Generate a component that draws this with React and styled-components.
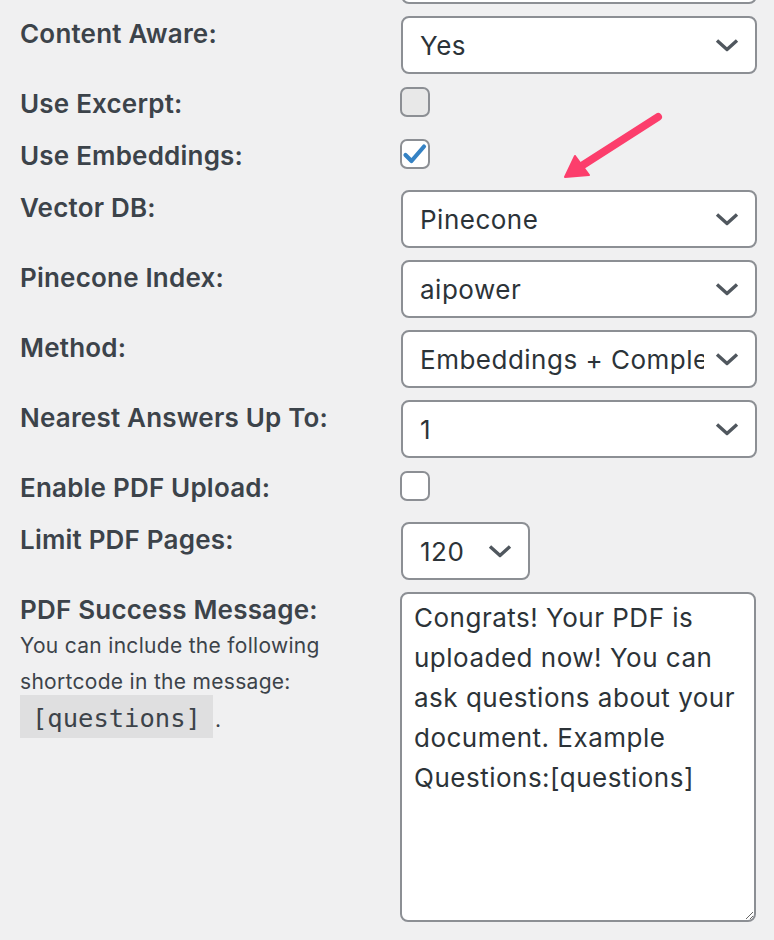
import React from 'react';
import styled, { createGlobalStyle } from 'styled-components';

const Global = createGlobalStyle`
  html, body {
    margin: 0;
    padding: 0;
    background: #f0f0f1;
    overflow: hidden;
  }
  body {
    font-family: Inter, "Noto Sans", "Liberation Sans", sans-serif;
    color: #3c434a;
  }
`;

// 페이지 전체
const Page = styled.div`
  position: relative;
  width: 774px;
  height: 940px;
  overflow: hidden;
`;

const Form = styled.div`
  display: grid;
  grid-template-columns: 381px 356px;
  align-items: start;
  padding-left: 20px;
  margin-top: -60px;
`;

const Label = styled.div`
  padding: 4px 0 8px;
  font-size: 26px;
  line-height: 40px;
  font-weight: 600;
  letter-spacing: 0.2px;
  color: #3c434a;
  white-space: nowrap;
`;

const LabelCell = styled.div`
  min-width: 0;
`;

const Field = styled.div`
  padding: 6px 0;
`;

const Description = styled.p`
  margin: -10px 0 0;
  font-size: 21px;
  line-height: 36px;
  letter-spacing: 0.3px;
  color: #3c434a;
  width: 330px;
`;

const Code = styled.code`
  font-family: "DejaVu Sans Mono", "Liberation Mono", monospace;
  font-size: 25.5px;
  letter-spacing: 0;
  background: rgba(0, 0, 0, 0.07);
  padding: 8px 12px 5px;
  margin-right: 2px;
`;

const SelectBox = styled.div`
  box-sizing: border-box;
  display: flex;
  align-items: center;
  width: ${p => p.$width || 356}px;
  height: 58px;
  padding: 0 16px 0 17px;
  background: #fff;
  border: 2px solid #8c8f94;
  border-radius: 8px;
  font-size: 26px;
  letter-spacing: 0.5px;
  color: #2c3338;
`;

const SelectText = styled.span`
  flex: 1;
  min-width: 0;
  overflow: hidden;
  white-space: nowrap;
  margin-right: 11px;
`;

const CheckBox = styled.div`
  box-sizing: border-box;
  width: 30px;
  height: 30px;
  margin: 1px 0 0 -1px;
  border: 2px solid #8c8f94;
  border-radius: 7px;
  background: ${p => (p.$muted ? '#e8e8e8' : '#fff')};
  display: flex;
  align-items: center;
  justify-content: center;
`;

const TextArea = styled.textarea`
  box-sizing: border-box;
  display: block;
  width: 356px;
  height: 330px;
  margin: 0 0 0 -1px;
  padding: 4px 12px;
  border: 2px solid #8c8f94;
  border-radius: 8px;
  background: #fff;
  font-family: Inter, "Noto Sans", "Liberation Sans", sans-serif;
  font-size: 26px;
  letter-spacing: 0.5px;
  line-height: 40px;
  color: #2c3338;
  outline: none;
`;

const Arrow = styled.svg`
  position: absolute;
  left: 555px;
  top: 105px;
`;

function Chevron() {
  return (
    <svg width="24" height="14" viewBox="0 0 24 14">
      <path d="M2 2.5 L12 11.5 L22 2.5" fill="none" stroke="#50575e" strokeWidth="3.4" strokeLinejoin="round" />
    </svg>
  );
}

function Select(props) {
  return (
    <SelectBox $width={props.width}>
      <SelectText>{props.value}</SelectText>
      <Chevron />
    </SelectBox>
  );
}

function Check(props) {
  return (
    <CheckBox $muted={props.muted}>
      {props.checked ? (
        <svg width="26" height="26" viewBox="0 0 26 26">
          <path d="M3.5 14 L9.5 20 L22 5.5" fill="none" stroke="#3582c4" strokeWidth="4.2" strokeLinecap="round" strokeLinejoin="round" />
        </svg>
      ) : null}
    </CheckBox>
  );
}

const rows = [
  { label: '', type: 'select', value: '' },
  { label: 'Content Aware:', type: 'select', value: 'Yes' },
  { label: 'Use Excerpt:', type: 'check', muted: true },
  { label: 'Use Embeddings:', type: 'check', checked: true },
  { label: 'Vector DB:', type: 'select', value: 'Pinecone' },
  { label: 'Pinecone Index:', type: 'select', value: 'aipower' },
  { label: 'Method:', type: 'select', value: 'Embeddings + Completion' },
  { label: 'Nearest Answers Up To:', type: 'select', value: '1' },
  { label: 'Enable PDF Upload:', type: 'check' },
  { label: 'Limit PDF Pages:', type: 'select', value: '120', width: 129 },
];

const message = 'Congrats! Your PDF is uploaded now! You can ask questions about your document. Example Questions:[questions]';

export default function App() {
  return (
    <Page>
      <Global />
      <Form>
        {rows.map((row, i) => (
          <React.Fragment key={i}>
            <LabelCell>
              <Label>{row.label}</Label>
            </LabelCell>
            <Field>
              {row.type === 'select'
                ? <Select value={row.value} width={row.width} />
                : <Check checked={row.checked} muted={row.muted} />}
            </Field>
          </React.Fragment>
        ))}

        <LabelCell>
          <Label>PDF Success Message:</Label>
          <Description>
            You can include the following shortcode in the message: <Code>[questions]</Code>.
          </Description>
        </LabelCell>
        <Field>
          <TextArea defaultValue={message} />
        </Field>
      </Form>

      <Arrow width="115" height="80" viewBox="0 0 115 80">
        <line x1="103" y1="12" x2="28" y2="60" stroke="#fc3e6c" strokeWidth="8" strokeLinecap="round" />
        <polygon points="10,72 20,51 34,70" fill="#fc3e6c" stroke="#fc3e6c" strokeWidth="2" strokeLinejoin="round" />
      </Arrow>
    </Page>
  );
}
